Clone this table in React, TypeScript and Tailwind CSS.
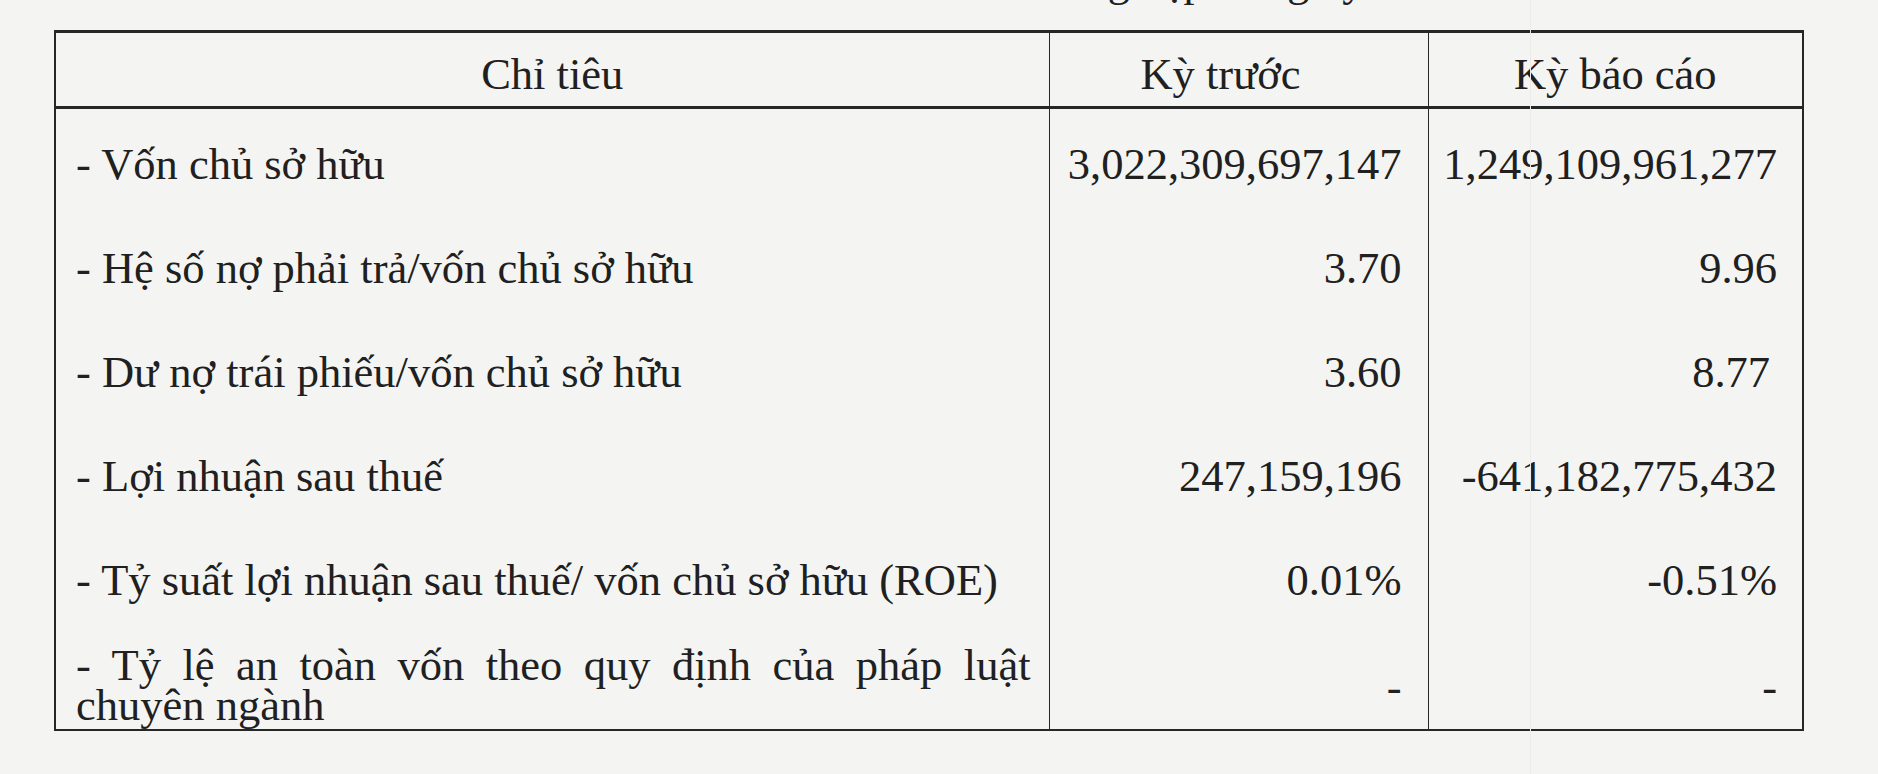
import React from "react";

const rows: { label: string; prev: string; cur: string; curPad?: string }[] = [
  { label: "- Vốn chủ sở hữu", prev: "3,022,309,697,147", cur: "1,249,109,961,277" },
  { label: "- Hệ số nợ phải trả/vốn chủ sở hữu", prev: "3.70", cur: "9.96" },
  { label: "- Dư nợ trái phiếu/vốn chủ sở hữu", prev: "3.60", cur: "8.77", curPad: "pr-[32px]" },
  { label: "- Lợi nhuận sau thuế", prev: "247,159,196", cur: "-641,182,775,432" },
  { label: "- Tỷ suất lợi nhuận sau thuế/ vốn chủ sở hữu (ROE)", prev: "0.01%", cur: "-0.51%" },
];

export default function App() {
  return (
    <div
      className="relative h-[774px] w-[1878px] overflow-hidden bg-[#f4f4f2] text-[#202020]"
      style={{ fontFamily: '"Liberation Serif", "Times New Roman", serif' }}
    >
      <div className="pointer-events-none absolute left-[1530px] top-0 h-full w-px bg-[#ebebe9]" />
      <div className="-mt-[43px] h-[50px] whitespace-nowrap pl-[520px] text-[44px] leading-[50px]">
        các chỉ tiêu tài chính của doanh nghiệp trong kỳ
      </div>
      <table className="ml-[54px] mt-[23px] w-[1748px] table-fixed border-collapse text-[44.5px] leading-[44px]">
        <colgroup>
          <col className="w-[994px]" />
          <col className="w-[379px]" />
          <col className="w-[375px]" />
        </colgroup>
        <thead>
          <tr className="h-[76px]">
            <th className="border-t-[3px] border-b-[3px] border-l-2 border-r-[1.5px] border-[#262626] pt-[8px] text-center font-normal">
              Chỉ tiêu
            </th>
            <th className="border-t-[3px] border-b-[3px] border-r-[1.5px] border-[#262626] pr-[36px] pt-[8px] text-center font-normal">
              Kỳ trước
            </th>
            <th className="border-t-[3px] border-b-[3px] border-r-2 border-[#262626] pt-[8px] text-center font-normal">
              Kỳ báo cáo
            </th>
          </tr>
        </thead>
        <tbody>
          {rows.map((r) => (
            <tr key={r.label} className="h-[104px]">
              <td className="border-l-2 border-r-[1.5px] border-[#262626] pl-[20px] pt-[8px] align-middle">{r.label}</td>
              <td className="border-r-[1.5px] border-[#262626] pr-[26px] pt-[8px] text-right align-middle">{r.prev}</td>
              <td className={`border-r-2 border-[#262626] pt-[8px] text-right align-middle ${r.curPad ?? "pr-[25px]"}`}>
                {r.cur}
              </td>
            </tr>
          ))}
          <tr className="h-[102px]">
            <td className="border-b-2 border-l-2 border-r-[1.5px] border-[#262626] pl-[20px] pr-[18px] pb-[4px] align-bottom leading-[40px]">
              <div className="text-justify [text-align-last:left]">
                - Tỷ lệ an toàn vốn theo quy định của pháp luật chuyên ngành
              </div>
            </td>
            <td className="border-b-2 border-r-[1.5px] border-[#262626] pr-[26px] pb-[20px] text-right align-bottom">-</td>
            <td className="border-b-2 border-r-2 border-[#262626] pr-[25px] pb-[20px] text-right align-bottom">-</td>
          </tr>
        </tbody>
      </table>
    </div>
  );
}
